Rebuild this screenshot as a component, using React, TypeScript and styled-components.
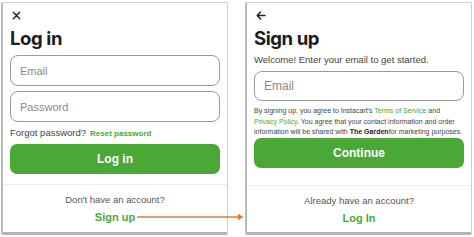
import type { FC } from 'react';
import styled, { createGlobalStyle } from 'styled-components';

const GREEN = '#4aa837';

const GlobalStyle = createGlobalStyle`
  html, body {
    margin: 0;
    padding: 0;
    background: #fff;
    font-family: "Liberation Sans", Arial, sans-serif;
  }
`;

const Stage = styled.div`
  position: relative;
  width: 474px;
  height: 237px;
  display: flex;
  gap: 17px;
  padding: 2px 2px 2px 1px;
  box-sizing: border-box;
  overflow: hidden;
`;

const Panel = styled.div`
  width: 227px;
  height: 233px;
  box-sizing: border-box;
  border: 1px solid #cfcfcf;
  border-left: 2px solid #b9b9b9;
  border-bottom: 3px solid #b5b5b5;
  border-radius: 2px;
  background: #fff;
  display: flex;
  flex-direction: column;
`;

const Body = styled.div`
  padding: 5px 7px 0 7px;
  display: flex;
  flex-direction: column;
`;

const IconRow = styled.div`
  height: 14px;
  display: flex;
  align-items: center;
  padding-left: 2px;
`;

const Title = styled.h1`
  margin: 4px 0 0;
  font-family: Inter, "Liberation Sans", sans-serif;
  font-weight: 700;
  font-size: 18.5px;
  line-height: 24px;
  letter-spacing: -0.4px;
  color: #1c1c1c;
`;

const Input = styled.div<{ $big?: boolean }>`
  height: ${p => (p.$big ? 30 : 31)}px;
  border: 1px solid #9a9a9a;
  border-radius: 8px;
  display: flex;
  align-items: center;
  padding-left: 9px;
  font-size: ${p => (p.$big ? 12 : 11)}px;
  color: #8a8a8a;
  box-sizing: border-box;
`;

const Inputs = styled.div<{ $top: number }>`
  margin-top: ${p => p.$top}px;
  display: flex;
  flex-direction: column;
  gap: 5px;
`;

const Forgot = styled.div`
  margin-top: 5px;
  font-size: 9.5px;
  line-height: 11px;
  color: #444;
  display: flex;
  align-items: baseline;
  gap: 4px;
`;

const GreenLink = styled.span<{ $size: number }>`
  color: ${GREEN};
  font-weight: 700;
  font-size: ${p => p.$size}px;
  line-height: ${p => p.$size + 2}px;
`;

const Button = styled.div<{ $top: number }>`
  margin-top: ${p => p.$top}px;
  height: 30px;
  border-radius: 7px;
  background: ${GREEN};
  color: #fff;
  font-weight: 700;
  font-size: 12px;
  display: flex;
  align-items: center;
  justify-content: center;
`;

const Footer = styled.div<{ $top: number }>`
  margin-top: ${p => p.$top}px;
  border-top: 1px solid #eeeeee;
  padding-top: 9px;
  display: flex;
  flex-direction: column;
  align-items: center;
  gap: 5px;
`;

const FooterText = styled.div`
  font-size: 9.5px;
  color: #555;
  line-height: 12px;
`;

const Welcome = styled.p`
  margin: 4px 0 0;
  font-size: 9.5px;
  line-height: 12px;
  color: #444;
`;

const Legal = styled.p`
  margin: 5px 0 0;
  font-size: 7px;
  line-height: 10.5px;
  color: #444;
  white-space: nowrap;
`;

const LegalLink = styled.span`
  color: ${GREEN};
`;

const Brand = styled.span`
  color: #222;
  font-weight: 700;
`;

const Arrow = styled.svg`
  position: absolute;
  left: 137px;
  top: 212px;
`;

const App: FC = () => (
  <>
    <GlobalStyle />
    <Stage>
      <Panel>
        <Body>
          <IconRow>
            <svg width="9" height="9" viewBox="0 0 10 10">
              <path d="M1.5 1.5 L8.5 8.5 M8.5 1.5 L1.5 8.5" stroke="#222" strokeWidth="1.6" strokeLinecap="round" />
            </svg>
          </IconRow>
          <Title>Log in</Title>
          <Inputs $top={5}>
            <Input>Email</Input>
            <Input>Password</Input>
          </Inputs>
          <Forgot>
            Forgot password? <GreenLink $size={8}>Reset password</GreenLink>
          </Forgot>
          <Button $top={5}>Log in</Button>
        </Body>
        <Footer $top={10}>
          <FooterText>Don't have an account?</FooterText>
          <GreenLink $size={11}>Sign up</GreenLink>
        </Footer>
      </Panel>
      <Panel>
        <Body>
          <IconRow>
            <svg width="10" height="9" viewBox="0 0 10 9">
              <path d="M9 4.5 H1.5 M4.5 1 L1.2 4.5 L4.5 8" stroke="#222" strokeWidth="1.5" fill="none" strokeLinecap="round" strokeLinejoin="round" />
            </svg>
          </IconRow>
          <Title>Sign up</Title>
          <Welcome>Welcome! Enter your email to get started.</Welcome>
          <Inputs $top={5}>
            <Input $big>Email</Input>
          </Inputs>
          <Legal>
            By signing up, you agree to Instacart's <LegalLink>Terms of Service</LegalLink> and
            <br />
            <LegalLink>Privacy Policy</LegalLink>. You agree that your contact information and order
            <br />
            information will be shared with <Brand>The Garden</Brand>for marketing purposes.
          </Legal>
          <Button $top={0}>Continue</Button>
        </Body>
        <Footer $top={17}>
          <FooterText>Already have an account?</FooterText>
          <GreenLink $size={11}>Log In</GreenLink>
        </Footer>
      </Panel>
      <Arrow width="108" height="10" viewBox="0 0 108 10">
        <path d="M0 5 H103" stroke="#e07a36" strokeWidth="1.6" />
        <path d="M101 1.8 L106.5 5 L101 8.2 Z" fill="#e07a36" />
      </Arrow>
    </Stage>
  </>
);

export default App;
